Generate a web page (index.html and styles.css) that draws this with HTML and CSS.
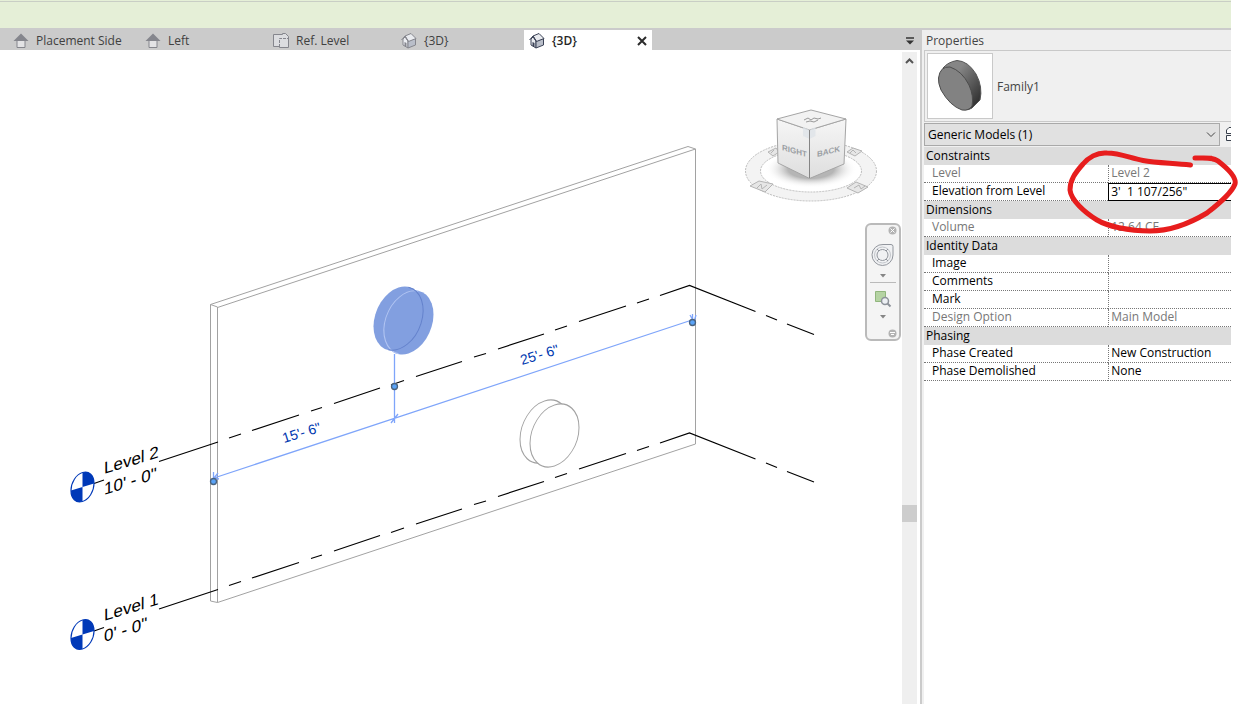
FILE: index.html
```html
<!DOCTYPE html>
<html lang="en">
<head>
<meta charset="utf-8">
<title>{3D} - Family1</title>
<link rel="stylesheet" href="styles.css">
</head>
<body>
<svg class="defs" width="0" height="0" aria-hidden="true">
  <symbol id="elevation" viewBox="0 0 16 16">
    <path d="M4 7h8v7.500H4z" fill="#e3e3e5" stroke="#85868d"/>
    <path d="M8 0.500L15.500 8H0.500z" fill="#85868d"/>
  </symbol>
  <symbol id="plan" viewBox="0 0 16 16">
    <path d="M.5 1.500h9V.5h3l3 3v11H6.500v-1h-6z" fill="#dcdde0" stroke="#85868d"/>
    <path d="M6.500 14V5.500H15" fill="none" stroke="#85868d" stroke-dasharray="3 1"/>
  </symbol>
  <symbol id="house" viewBox="0 0 16 16">
    <path d="M2 6v6l5 3V8L4 4z" fill="#eceef2" stroke="currentColor"/>
    <path d="M7 8v7l7.500-3V5.500z" fill="#b9bec9" stroke="currentColor"/>
    <path d="M4 3l6-2.500 5 5-7.500 3z" fill="#e9ebef" stroke="currentColor"/>
    <path d="M.5 7L4 3l3.500 5.500" fill="none" stroke="currentColor"/>
    <path d="M3.500 9v4l2 1v-4z" fill="currentColor"/>
  </symbol>
</svg>
<div class="app">
  <div class="options-bar"></div>
  <div class="workspace">
    <main class="view">
      <nav class="tabs">
        <button class="tab tab-first"><svg class="icon"><use href="#elevation"/></svg><span>Placement Side</span></button>
        <button class="tab"><svg class="icon"><use href="#elevation"/></svg><span>Left</span></button>
        <button class="tab"><svg class="icon"><use href="#plan"/></svg><span>Ref. Level</span></button>
        <button class="tab"><svg class="icon"><use href="#house"/></svg><span>{3D}</span></button>
        <div class="tab tab-active"><svg class="icon"><use href="#house"/></svg><span>{3D}</span>
          <button class="close" aria-label="Close view"><svg width="10" height="10"><path d="M1 1l8 8M9 1L1 9" stroke="#2b2b2b" stroke-width="2"/></svg></button>
        </div>
        <button class="tab-list" aria-label="View list"><svg width="10" height="8"><path d="M1 1h8" stroke="#333" stroke-width="1.500"/><path d="M1 3.500h8L5 7.500z" fill="#333"/></svg></button>
      </nav>
      <div class="canvas">
        <svg class="model" viewBox="0 50 902 654" preserveAspectRatio="xMinYMin meet">
          <g class="wall">
            <path d="M210.500 304.500V601l7 1.500 478-158.500V149L688 146.500 210.500 304.500l7 2.500v295.500M217.500 307.500L695.500 149"/>
          </g>
          <g class="disc">
            <ellipse rx="24.500" ry="30.500" transform="translate(544.500 431.500) skewY(-18)"/>
            <ellipse rx="24.500" ry="30.500" transform="translate(554.500 435.500) skewY(-18)"/>
          </g>
          <g id="level-line" class="level-line">
            <path d="M159 461.500L218 442M229 438l12-4M252 430.500l47-15.500M311 411l11-3.500M334 403.500l46-15.500M391 385l13-4.500M416 376.500l46-15M474 357l12-3.500M498 349l46-15M555 330l12-4M579 321.500l47-15.500M637 303l12-4M660 295.500L689.500 285.500l66 26M766 315.500l11 4.500M787 324l27 10.500M94 483.500l10-3.500"/>
            <g transform="translate(82.500 487) skewY(-17)">
              <ellipse rx="11.500" ry="14.500" fill="#fff" stroke="#0039b8"/>
              <path d="M0 0V-14.500A11.500 14.500 0 0 1 11.500 0zM0 0V14.500A11.500 14.500 0 0 1-11.500 0z" fill="#0039b8" stroke="none"/>
            </g>
          </g>
          <use href="#level-line" y="147.500"/>
          <g class="level-text">
            <text transform="translate(104 474) skewY(-17)">Level 2</text>
            <text transform="translate(104 495) skewY(-17)">10' - 0"</text>
            <text transform="translate(104 621) skewY(-17)">Level 1</text>
            <text transform="translate(104 642) skewY(-17)">0' - 0"</text>
          </g>
          <g class="selected">
            <ellipse rx="25" ry="31" transform="translate(398.500 318.500) skewY(-18)"/>
            <ellipse rx="25" ry="31" transform="translate(408.500 322.500) skewY(-18)"/>
            <g transform="translate(408.500 322.500) skewY(-18)"><path class="edge-light" d="M10-28A24.500 30.500 0 1 0-10 28"/></g>
            <g transform="translate(398.500 318.500) skewY(-18)"><path class="edge-dark" d="M10-28A24.500 30.500 0 0 1-10 28"/></g>
          </g>
          <g class="dimension">
            <path d="M214 478L692 320M394.500 354v69M213.500 472v9M214 478l4-5M214 478l5 1M391 423l7-9M692.500 314v8M690 315l4 7 2-7"/>
            <circle cx="213.500" cy="481.500" r="3"/>
            <circle cx="394.500" cy="386.500" r="3"/>
            <circle cx="692.500" cy="322.500" r="3"/>
            <text transform="translate(284 443) rotate(-17)">15'- 6"</text>
            <text transform="translate(522 365) rotate(-17)">25'- 6"</text>
          </g>
        </svg>
        <svg class="viewcube" width="134" height="94" viewBox="744 109 134 94">
          <defs>
            <linearGradient id="face" x1="0" y1="0" x2="0" y2="1"><stop offset="0" stop-color="#f6f6f6"/><stop offset="1" stop-color="#dedede"/></linearGradient>
            <radialGradient id="shade"><stop offset=".5" stop-color="#b5b5b5"/><stop offset="1" stop-color="#fff" stop-opacity="0"/></radialGradient>
          </defs>
          <g stroke="#bdbdbd" stroke-dasharray="2 1">
            <ellipse cx="811" cy="171" rx="65.500" ry="30" fill="#f3f3f3"/>
            <ellipse cx="811" cy="171" rx="50.500" ry="21" fill="#fff"/>
          </g>
          <ellipse cx="811" cy="169" rx="46" ry="19" fill="url(#shade)"/>
          <g fill="#e6e6e6" stroke="#b4b4b4">
            <path d="M750 186l9-5 14 3-8 8zM847 188l9-6 12 5-10 6zM768 152l8-4 3 4-6 4zM847 152l6-4 9 3-7 5z"/>
            <path d="M757 188l4-4 1 5 5-4M854 188l5-3 2 4 4-3M850 153l3-3 3 3M771 153l3-3" fill="none"/>
          </g>
          <path d="M777 119l32.500 11v48.500L778 163z" fill="url(#face)" stroke="#a5a5a5"/>
          <path d="M846 119l-36.500 11v48.500L844 164z" fill="url(#face)" stroke="#a5a5a5"/>
          <path d="M777 119l34-9 35 9-36.500 11z" fill="#f2f2f2" stroke="#a5a5a5"/>
          <path d="M803 127l6.500 3 6-3v9l-6 3-6.500-3z" fill="#dfe3e8" opacity=".8"/>
          <path d="M809.500 130v48" stroke="#858585"/>
          <path d="M804 120l4-2 3 2 3-2 4 1 3-1M806 122l4-1 4 1 4-2" fill="none" stroke="#999"/>
          <text class="cube-text" transform="translate(782 150) skewY(16)">RIGHT</text>
          <text class="cube-text" transform="translate(817 157) skewY(-14)">BACK</text>
        </svg>
        <div class="navbar">
          <button class="nav-dot" aria-label="Close"><svg width="9" height="9"><circle cx="4.500" cy="4.500" r="4" fill="#b3b3b3"/><path d="M2.500 2.500l4 4M6.500 2.500l-4 4" stroke="#fff"/></svg></button>
          <button class="nav-tool" aria-label="Steering wheel"><svg width="24" height="24" fill="#f0f1f3" stroke="#92969d"><path d="M12 1.500h8a2 2 0 0 1 2 2V12A10.500 10.500 0 1 1 12 1.500z"/><circle cx="11.500" cy="12" r="8" stroke="#c3c6cb"/><circle cx="11.500" cy="12" r="5.500"/><path d="M6 6l2 2M17 6l-2 2M6 18l2-2M17 18l-2-2"/></svg></button>
          <button class="nav-more" aria-label="Wheel options"><svg width="6" height="4"><path d="M0 0h6L3 3.500z" fill="#858585"/></svg></button>
          <hr>
          <button class="nav-tool" aria-label="Zoom"><svg width="18" height="18"><path d="M1.500 1.500h10v10h-10z" fill="#b5d3a3" stroke="#91b67d"/><circle cx="11" cy="11" r="3.500" fill="#edf0f4" stroke="#8d929a" stroke-width="1.500"/><path d="M13.500 13.500l3 3" stroke="#8d929a" stroke-width="2"/></svg></button>
          <button class="nav-more" aria-label="Zoom options"><svg width="6" height="4"><path d="M0 0h6L3 3.500z" fill="#858585"/></svg></button>
          <button class="nav-dot nav-last" aria-label="Customize"><svg width="9" height="9"><circle cx="4.500" cy="4.500" r="4" fill="#b3b3b3"/><path d="M2 3.500h5M3 5.500h3" stroke="#fff"/></svg></button>
        </div>
        <div class="scrollbar">
          <svg class="scroll-up" width="9" height="6"><path d="M1 5l3.500-3.500L8 5" fill="none" stroke="#555" stroke-width="2"/></svg>
          <span class="thumb"></span>
        </div>
      </div>
    </main>
    <aside class="properties">
      <h1 class="title">Properties</h1>
      <div class="type">
        <span class="preview"><svg width="64" height="64">
          <defs><linearGradient id="rim" x1="0" y1="0" x2="1" y2="1"><stop offset=".3" stop-color="#868686"/><stop offset=".9" stop-color="#303030"/></linearGradient></defs>
          <path d="M15 14Q20 8 29 6.500Q40 7 48 20Q55 33 52 46L44 54Q38 58 30 53z" fill="url(#rim)" stroke="#555"/>
          <path d="M10.500 24Q12 12 22 13Q34 17 41 31Q46 42 44 52Q41 57 34 56Q22 52 13 36Q10 29 10.500 24z" fill="#828282" stroke="#4c4c4c"/>
        </svg></span>
        <span class="family">Family1</span>
      </div>
      <div class="filter">
        <div class="select-box">
          <select aria-label="Filter"><option>Generic Models (1)</option></select>
          <svg class="chevron" width="10" height="6"><path d="M1 .5l4 4 4-4" fill="none" stroke="#444"/></svg>
        </div>
        <svg class="edit-type" width="5" height="16"><path d="M5 .5H3L.5 3v3.500H5M5 8.500H.5v5H5M1 6.500h4" fill="#fff" stroke="#39404c"/></svg>
      </div>
      <table class="params">
        <colgroup><col class="name-col"><col></colgroup>
        <tbody>
          <tr class="group"><th colspan="2">Constraints</th></tr>
          <tr class="readonly"><th>Level</th><td>Level 2</td></tr>
          <tr><th><label for="elev">Elevation from Level</label></th><td class="editing"><input id="elev" value="3'&nbsp; 1 107/256&quot;"></td></tr>
          <tr class="group"><th colspan="2">Dimensions</th></tr>
          <tr class="readonly"><th>Volume</th><td>12.64 CF</td></tr>
          <tr class="group"><th colspan="2">Identity Data</th></tr>
          <tr><th>Image</th><td></td></tr>
          <tr><th>Comments</th><td></td></tr>
          <tr><th>Mark</th><td></td></tr>
          <tr class="readonly"><th>Design Option</th><td>Main Model</td></tr>
          <tr class="group"><th colspan="2">Phasing</th></tr>
          <tr><th>Phase Created</th><td>New Construction</td></tr>
          <tr><th>Phase Demolished</th><td>None</td></tr>
        </tbody>
      </table>
      <svg class="markup" width="174" height="88" viewBox="1066 149 174 88">
        <path d="M1190.500 165C1172 163 1157 163 1143 160.500C1130 158 1120 153 1107 153C1097 152 1088 158 1083 164C1075 173 1070 180 1070 190C1071 200 1084 212 1097 220C1107 226 1128 231 1150 231C1172 231 1192 222 1207 213C1220 203 1232 192 1235 184C1237 177 1227 168 1218 161C1213 157 1206 158 1195 158"/>
      </svg>
    </aside>
  </div>
</div>
</body>
</html>
```

FILE: styles.css
```css
* { box-sizing: border-box; }

body {
  margin: 0;
  background: #fff;
  color: #000;
  font: 12px/16px "Open Sans", "Noto Sans", sans-serif;
}

button {
  border: 0;
  padding: 0;
  background: none;
  color: inherit;
  font: inherit;
}

svg { display: block; }
.defs { position: absolute; }

.app {
  display: flex;
  flex-direction: column;
  min-height: 100vh;
  padding-right: 9px;
}

.options-bar {
  height: 28px;
  padding-top: 1px;
  background: #e5efd7;
}
.options-bar::before {
  content: "";
  display: block;
  height: 1px;
  background: #c9cec5;
}

.workspace {
  flex: 1;
  display: grid;
  grid-template-columns: minmax(0, 1fr) 311px;
}

.view {
  display: flex;
  flex-direction: column;
}

.tabs {
  display: flex;
  align-items: flex-end;
  height: 22px;
  padding-left: 8px;
  background: #cbcbcb;
  color: #404040;
}
.tab {
  display: flex;
  align-items: center;
  gap: 7px;
  width: 128px;
  height: 20px;
  padding: 2px 0 0 5px;
  text-align: left;
  white-space: nowrap;
}
.tab-first { width: 132px; }
.icon { width: 16px; height: 16px; color: #85868d; }
.tab-active {
  background: #fff;
  color: #262626;
  font-weight: 600;
}
.tab-active .icon { color: #3b4256; }
.close { margin-left: auto; padding: 5px; }
.tab-list { margin: 0 5px 5px auto; }

.canvas {
  position: relative;
  flex: 1;
  display: flex;
}
.model { flex: 1; min-width: 0; height: 654px; }

.wall, .disc { fill: #fff; stroke: #a2a2a2; }
.wall { fill: none; }
.level-line { fill: none; stroke: #000; stroke-width: 1.2; }
.level-text { font: 17px "Liberation Sans", sans-serif; }
.selected { fill: #829fe0; }
.edge-light { fill: none; stroke: #b2c5f2; }
.edge-dark { fill: none; stroke: #6482cc; }
.dimension { fill: none; stroke: #7fa5fa; stroke-width: 1.3; }
.dimension circle { fill: #5aa3f7; stroke: #49627e; }
.dimension text {
  fill: #0039b0;
  stroke: none;
  font: 14px "Liberation Sans", sans-serif;
}

.viewcube { position: absolute; top: 59px; right: 42px; }
.cube-text {
  fill: #9b9fa4;
  font: bold 8px "Liberation Sans", sans-serif;
}

.navbar {
  position: absolute;
  top: 173px;
  right: 19px;
  display: flex;
  flex-direction: column;
  align-items: center;
  width: 36px;
  height: 118px;
  border: 2px solid #bababa;
  border-radius: 6px;
  background: #f4f4f4;
}
.nav-dot { align-self: flex-end; margin: 1px 2px; }
.nav-tool { margin-top: 7px; }
.nav-more { margin-top: 7px; }
.navbar hr {
  width: 26px;
  margin: 4px 0 0;
  border: 0;
  border-top: 1px solid #bababa;
}
.nav-last { margin-top: auto; }

.scrollbar {
  display: flex;
  flex-direction: column;
  align-items: center;
  width: 15px;
  margin: 2px 3px 0 0;
  padding-top: 6px;
  background: #efefef;
}
.thumb {
  width: 15px;
  height: 17px;
  margin-top: 441px;
  background: #cdcdcd;
}

.properties {
  position: relative;
  border-left: 2px solid #cbcbcb;
  border-top: 2px solid #cbcbcb;
  padding-left: 2px;
  background: linear-gradient(#f0f0f0, #f0f0f0) left / 2px 100% no-repeat #fff;
}
.title {
  height: 20px;
  margin: 0 0 0 -2px;
  padding: 3px 4px;
  background: #eee;
  color: #444;
  font-size: 12px;
  font-weight: 400;
  line-height: 16px;
}
.type {
  display: flex;
  align-items: center;
  gap: 4px;
  padding: 2px;
  border: 1px solid #c9c9c9;
  border-right: 0;
  background: #f0f0f0;
  color: #444;
}
.preview {
  border: 1px solid #c9c9c9;
  background: #fff;
}
.family { padding-top: 2px; }
.filter {
  display: flex;
  align-items: center;
  gap: 6px;
  padding: 1px 0;
  background: #f0f0f0;
}
.select-box { position: relative; flex: 1; }
select {
  display: block;
  appearance: none;
  width: 100%;
  height: 23px;
  padding: 0 3px;
  border: 1px solid #a9a9a9;
  border-radius: 0;
  background: #e1e1e1;
  color: #000;
  font: inherit;
}
.chevron { position: absolute; right: 4px; top: 9px; }

.params {
  width: 100%;
  border-collapse: separate;
  border-spacing: 0;
  table-layout: fixed;
}
.name-col { width: 60%; }
.params th, .params td {
  height: 18px;
  padding: 0 2px 1px 8px;
  border-bottom: 1px dotted #777;
  font-weight: 400;
  line-height: 16px;
  text-align: left;
  white-space: nowrap;
}
.params td {
  padding-left: 2px;
  border-left: 1px dotted #777;
}
.params .group th {
  padding: 0 2px;
  border: 0;
  background: #dcdcdc;
  line-height: 18px;
}
.params .readonly { color: #777; }
.params .editing { padding: 0; border: 0; }
.params input {
  display: block;
  width: 100%;
  height: 18px;
  padding: 0 2px 2px;
  border: 1px solid #000;
  border-right: 0;
  border-radius: 0;
  background: #fff;
  outline: 0;
  font: inherit;
}

.markup { position: absolute; top: 119px; right: -9px; }
.markup path {
  fill: none;
  stroke: #e71d1d;
  stroke-width: 5;
  stroke-linecap: round;
}
```
